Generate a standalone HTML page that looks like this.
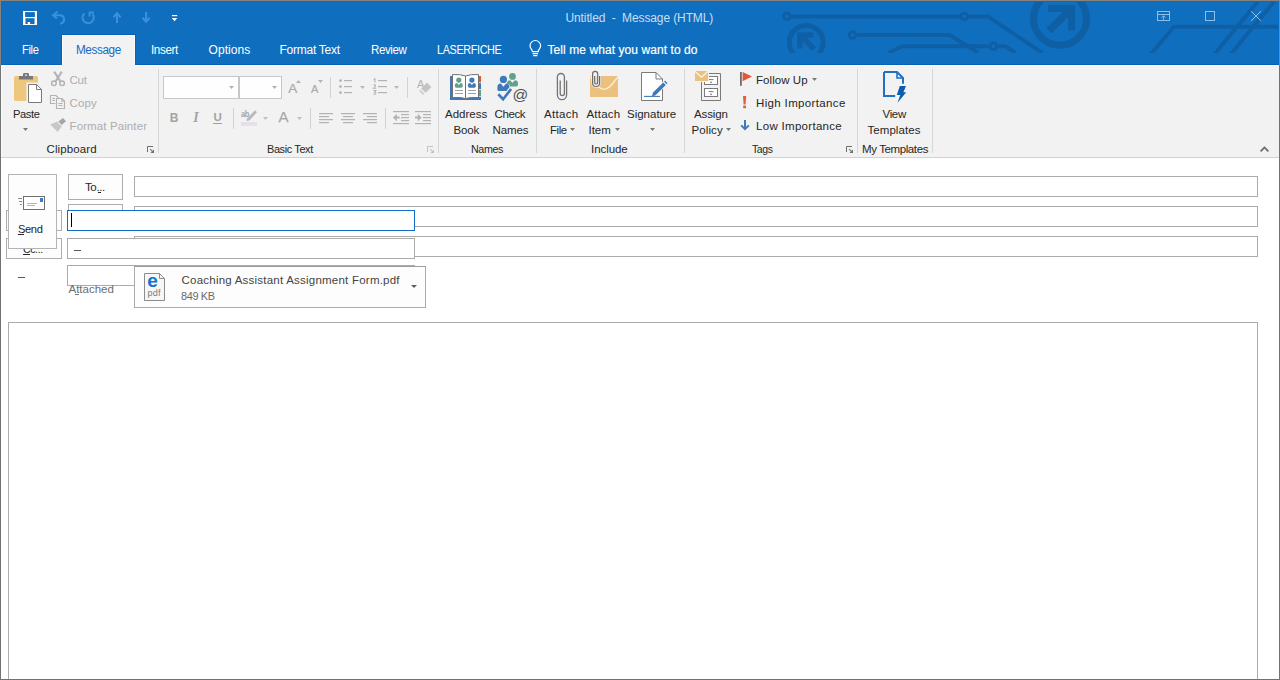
<!DOCTYPE html>
<html lang="en">
<head>
<meta charset="utf-8">
<title>Untitled - Message (HTML)</title>
<style>

html,body{margin:0;padding:0;}
body{width:1280px;height:680px;overflow:hidden;position:relative;background:#ffffff;
  font-family:"Liberation Sans",sans-serif;font-size:12px;color:#262626;}
.a{position:absolute;}
.t{position:absolute;white-space:pre;display:block;}
svg{position:absolute;overflow:visible;}
#win{position:absolute;left:0;top:0;width:1280px;height:680px;overflow:hidden;}
/* window frame */
#frame-top{left:0;top:0;width:1280px;height:1px;background:#878480;}
#frame-left-a{left:0;top:0;width:1px;height:65px;background:#878480;}
#frame-left-b{left:0;top:65px;width:1px;height:615px;background:#727272;}
#frame-right-a{left:1279px;top:0;width:1px;height:65px;background:#8a8580;}
#frame-right-b{left:1279px;top:65px;width:1px;height:615px;background:#727272;}
#frame-bottom{left:0;top:679px;width:1280px;height:1px;background:#727272;}


#titlebar{left:1px;top:1px;width:1278px;height:64px;background:#106ebe;overflow:hidden;
  box-shadow:inset 1px 1px 0 #066bc5, inset -1px 0 0 #066bc5;}
#circuit{left:2px;top:2px;width:1276px;height:50.5px;overflow:hidden;}


#tab-message{left:62px;top:35px;width:73px;height:31px;background:#f2f2f2;box-sizing:border-box;
  border:1px solid #fffaf5;border-bottom:0;box-shadow:0 0 0 1px #0562bb;}


#ribbon{left:1px;top:65px;width:1278px;height:92px;background:#f2f2f2;border-bottom:1px solid #d2d2d2;}
#ribbon-hi{left:1px;top:65px;width:61px;height:1px;background:#fdfaf6;}
#ribbon-hi-r{left:135px;top:65px;width:1144px;height:1px;background:#fdfaf6;}
#ribbon-hi2{left:1px;top:66px;width:1px;height:91px;background:#fbfbfb;}
.gsep{position:absolute;top:69px;width:1px;height:84px;background:#d6d6d6;}
.isep{position:absolute;width:1px;background:#d2d2d2;}
.combo{position:absolute;top:76px;height:21px;background:#fefefe;border:1px solid #c8c8c8;}



.fld{position:absolute;background:#fff;border:1px solid #ababab;box-sizing:border-box;}
.btn{position:absolute;background:#fdfdfd;border:1px solid #adadad;box-sizing:border-box;}
#fld-focus{border-color:#0f6fc8;}
#caret{left:71px;top:213px;width:1px;height:14px;background:#000;}
#attach{left:134px;top:266px;width:292px;height:42px;background:#fdfdfd;border:1px solid #ababab;border-top-color:#9d9d9d;box-sizing:border-box;}
#bodybox{left:8px;top:322px;width:1250px;height:370px;background:#fff;border:1px solid #ababab;box-sizing:border-box;}


</style>
</head>
<body>
<!-- 00_base -->
<div id="win">
<!-- 10_title -->

<div class="a" id="titlebar"></div>
<div class="a" style="left:1px;top:64px;width:1278px;height:1px;background:#0562bb"></div>

<div class="a" id="circuit"><svg width="1276" height="51" viewBox="2 2 1276 51" style="left:0;top:0">
 <g fill="none" stroke="#0f5fa5" stroke-width="3.9" stroke-linejoin="round">
  <!-- trace 1 -->
  <path d="M791 16.5 H959.8 M969 16.5 H987.8 L1042.4 53"/>
  <circle cx="786.9" cy="16.4" r="3.3" stroke-width="2.9"/>
  <circle cx="964.4" cy="16.4" r="3.3" stroke-width="2.9"/>
  <!-- trace 2 -->
  <path d="M857.2 35 H949.6 L978.6 53"/>
  <circle cx="852.5" cy="35" r="3.3" stroke-width="2.9"/>
  <!-- trace 3 -->
  <path d="M888 53 L902.5 46.3 H988.8 M998.3 46.3 H1005.4 L1015.6 53"/>
  <circle cx="993.5" cy="46.2" r="3.3" stroke-width="2.9"/>
  <!-- right traces -->
  <path d="M1151 54 L1174 26.7 H1280"/>
  <path d="M1214.6 54 L1259.2 0"/>
  <path d="M1230.8 54 L1275.4 0"/>
 </g>
 <!-- small NW arrow badge -->
 <circle cx="806.2" cy="42.4" r="17" fill="none" stroke="#0f5fa5" stroke-width="5"/>
 <path d="M797.2 32.2 H813.6 V37.6 H806.6 L816 47 L812 51 L802.6 41.6 V48.6 H797.2 Z" fill="#0f5fa5"/>
 <!-- big NE arrow badge -->
 <circle cx="1060" cy="18.7" r="26.5" fill="none" stroke="#0f5fa5" stroke-width="7"/>
 <path d="M1048 5 H1075 V30.6 H1068 V17 L1051.5 33.2 L1046.4 28 L1063 12 H1048 Z" fill="#0f5fa5"/>
</svg></div>


<!-- save -->
<svg width="16" height="16" style="left:22px;top:10px" viewBox="22 10 16 16">
 <g fill="#fdf8f4">
 <rect x="23" y="11" width="2.1" height="14"/><rect x="34.9" y="11" width="2.1" height="14"/>
 <rect x="23" y="11" width="14" height="1.1"/><rect x="23" y="24" width="14" height="1"/>
 <rect x="25" y="17" width="10" height="1.2"/>
 <rect x="25" y="18" width="0.8" height="6" opacity="0.55"/><rect x="34.2" y="18" width="0.8" height="6" opacity="0.55"/>
 <rect x="27.7" y="22" width="2.4" height="2.2"/>
 </g>
</svg>
<!-- undo -->
<svg width="18" height="16" style="left:50px;top:10px" viewBox="50 10 18 16">
 <path d="M57.6 11.6 L53 15.2 L57 18.6" fill="none" stroke="#3a90da" stroke-width="2"/>
 <path d="M53.4 15.2 H60.4 A4.3 4.3 0 0 1 61 23.6 L60.2 23.7" fill="none" stroke="#3a90da" stroke-width="2"/>
</svg>
<!-- redo/repeat -->
<svg width="16" height="16" style="left:80px;top:10px" viewBox="80 10 16 16">
 <path d="M84.4 13.4 A5.6 5.6 0 1 0 92.6 14.2" fill="none" stroke="#3a90da" stroke-width="2"/>
 <path d="M89.6 16.6 V12.4 H94" fill="none" stroke="#3a90da" stroke-width="2"/>
</svg>
<!-- previous item -->
<svg width="14" height="16" style="left:110px;top:10px" viewBox="110 10 14 16">
 <path d="M117 13 V23 M113.4 17.2 L117 13.4 L120.6 17.2" fill="none" stroke="#3a90da" stroke-width="2.1"/>
</svg>
<!-- next item -->
<svg width="14" height="16" style="left:139px;top:10px" viewBox="139 10 14 16">
 <path d="M146.1 12 V22 M142.5 17.8 L146.1 21.6 L149.7 17.8" fill="none" stroke="#3a90da" stroke-width="2.1"/>
</svg>
<!-- customize QAT -->
<svg width="10" height="10" style="left:170px;top:13px" viewBox="170 13 10 10">
 <rect x="171.9" y="15" width="5.3" height="1.2" fill="#fff"/>
 <path d="M171.7 18 H177.3 L174.5 21.3 Z" fill="#fff"/>
</svg>

<span class="t" style="left:565.50px;top:11.40px;font-size:12px;line-height:14px;color:#c9def2;letter-spacing:-0.112px;">Untitled  -  Message (HTML)</span>

<!-- ribbon display options -->
<svg width="16" height="14" style="left:1156px;top:9px" viewBox="1156 9 16 14">
 <rect x="1157.5" y="11.5" width="12" height="9" fill="none" stroke="#8fbde4" stroke-width="1"/>
 <path d="M1157.5 14.5 H1169.5" stroke="#8fbde4" stroke-width="1"/>
 <path d="M1163.5 20 V15.8 M1161.4 17.8 L1163.5 15.7 L1165.6 17.8" fill="none" stroke="#8fbde4" stroke-width="0.9"/>
</svg>
<!-- maximize -->
<svg width="14" height="14" style="left:1203px;top:9px" viewBox="1203 9 14 14">
 <rect x="1205.5" y="11.5" width="9" height="9" fill="none" stroke="#8fbde4" stroke-width="1"/>
</svg>
<!-- close -->
<svg width="14" height="14" style="left:1249px;top:9px" viewBox="1249 9 14 14">
 <path d="M1251 11 L1261 21 M1261 11 L1251 21" stroke="#8fbde4" stroke-width="1"/>
</svg>


<!-- 20_tabs -->

<div class="a" id="tab-message"></div>
<span class="t" style="left:21.50px;top:43.30px;font-size:12px;line-height:14px;color:#ffffff;letter-spacing:-0.400px;transform:scaleX(0.9309);transform-origin:0 0;">File</span>
<span class="t" style="left:75.50px;top:43.30px;font-size:12px;line-height:14px;color:#1868bd;letter-spacing:-0.400px;transform:scaleX(0.9761);transform-origin:0 0;">Message</span>
<span class="t" style="left:150.50px;top:43.30px;font-size:12px;line-height:14px;color:#ffffff;letter-spacing:-0.400px;transform:scaleX(0.9719);transform-origin:0 0;">Insert</span>
<span class="t" style="left:208.50px;top:43.30px;font-size:12px;line-height:14px;color:#ffffff;letter-spacing:0.081px;">Options</span>
<span class="t" style="left:279.50px;top:43.30px;font-size:12px;line-height:14px;color:#ffffff;letter-spacing:-0.253px;">Format Text</span>
<span class="t" style="left:370.50px;top:43.30px;font-size:12px;line-height:14px;color:#ffffff;letter-spacing:-0.400px;transform:scaleX(0.9605);transform-origin:0 0;">Review</span>
<span class="t" style="left:436.50px;top:43.30px;font-size:12px;line-height:14px;color:#ffffff;letter-spacing:-0.400px;transform:scaleX(0.9032);transform-origin:0 0;">LASERFICHE</span>
<!-- tell me lightbulb -->
<svg width="16" height="18" style="left:527px;top:40px" viewBox="527 40 16 18">
 <path d="M532.4 51.6 C532.4 49.6 530 48.6 530 45.8 A5.3 5.3 0 0 1 540.6 45.8 C540.6 48.6 538.2 49.6 538.2 51.6 Z" fill="none" stroke="#fff" stroke-width="1.2"/>
 <path d="M532.6 53.6 H538 M533.2 55.6 H537.4" stroke="#fff" stroke-width="1.1"/>
</svg>
<span class="t" style="left:547.50px;top:43.30px;font-size:12px;line-height:14px;color:#ffffff;letter-spacing:0.075px;-webkit-text-stroke:0.18px #fff;">Tell me what you want to do</span>

<!-- 30_ribbon -->

<div class="a" id="ribbon"></div><div class="a" id="ribbon-hi"></div><div class="a" id="ribbon-hi-r"></div><div class="a" id="ribbon-hi2"></div>
<div class="gsep" style="left:158px"></div><div class="gsep" style="left:438px"></div><div class="gsep" style="left:536px"></div><div class="gsep" style="left:684px"></div><div class="gsep" style="left:857px"></div><div class="gsep" style="left:932px"></div>

<!-- paste -->
<svg width="30" height="32" style="left:13px;top:72px" viewBox="13 72 30 32">
 <rect x="14" y="76" width="24" height="25" rx="1.6" fill="#eec77e"/>
 <path d="M23 76 V74.2 Q23 73 24.2 73 H27.8 Q29 73 29 74.2 V76 H33 V79.6 H19 V76 Z" fill="#787878"/>
 <rect x="25.2" y="74.4" width="1.6" height="1.6" fill="#e8e8e8"/>
 <path d="M27.5 83.5 H37 L42.5 89 V103.5 H27.5 Z" fill="#fff" stroke="#f2f2f2" stroke-width="2.2"/>
 <path d="M28.5 84.5 H36.6 L41.5 89.4 V102.5 H28.5 Z" fill="#fff" stroke="#7a7a7a" stroke-width="1"/>
 <path d="M36.5 84.6 V89.5 H41.4" fill="none" stroke="#7a7a7a" stroke-width="1"/>
</svg>
<span class="t" style="left:12.50px;top:108.00px;font-size:11.5px;line-height:12px;color:#262626;letter-spacing:-0.400px;transform:scaleX(0.9672);transform-origin:0 0;">Paste</span>
<svg width="5" height="3" style="left:23px;top:128px" viewBox="0 0 5 3"><path d="M0 0 H5 L2.5 3 Z" fill="#777777"/></svg>
<!-- cut -->
<svg width="16" height="17" style="left:50px;top:70px" viewBox="50 70 16 17">
 <g fill="none" stroke="#b3b3b3">
  <path d="M54.2 71.6 L60.4 81.4 M61.8 71.6 L55.6 81.4" stroke-width="2"/>
  <circle cx="53.9" cy="83.3" r="2.3" stroke-width="1.5"/><circle cx="62.1" cy="83.3" r="2.3" stroke-width="1.5"/>
 </g>
</svg>
<span class="t" style="left:69.50px;top:74.00px;font-size:11.5px;line-height:12px;color:#adadad;letter-spacing:-0.258px;">Cut</span>
<!-- copy -->
<svg width="17" height="16" style="left:49px;top:94px" viewBox="49 94 17 16">
 <g fill="none" stroke="#b3b3b3" stroke-width="1.1">
  <path d="M55.5 103.5 H50.5 V95.5 H56 L58.5 98"/>
  <path d="M52.4 98.5 H55 M52.4 100.5 H55"/>
  <path d="M56.5 98.5 H62 L64.5 101 V108.5 H56.5 Z"/>
  <path d="M61.8 98.6 V101.2 H64.4"/>
  <path d="M58.4 103.5 H62.6 M58.4 105.5 H62.6"/>
 </g>
</svg>
<span class="t" style="left:69.50px;top:97.00px;font-size:11.5px;line-height:12px;color:#adadad;letter-spacing:0.161px;">Copy</span>
<!-- format painter -->
<svg width="18" height="16" style="left:49px;top:117px" viewBox="49 117 18 16">
 <path d="M63 118 L66 121.2 L61.6 125 L58.4 121.6 Z" fill="#a6a6a6"/>
 <path d="M57.4 121.4 L62 126 L57.6 132 L50.2 124.6 Z" fill="#c9c6c9"/>
 <path d="M57.6 122 L61.4 125.8" stroke="#f2f2f2" stroke-width="1"/>
</svg>
<span class="t" style="left:69.50px;top:119.80px;font-size:11.5px;line-height:12px;color:#adadad;letter-spacing:0.112px;">Format Painter</span>
<span class="t" style="left:46.50px;top:143.00px;font-size:11.5px;line-height:12px;color:#262626;letter-spacing:0.123px;">Clipboard</span>
<!-- dialog launcher -->
<svg width="8" height="8" style="left:147px;top:146px" viewBox="0 0 8 8">
 <path d="M0.5 6 V0.5 H6" fill="none" stroke="#6e6e6e" stroke-width="1"/>
 <path d="M3.2 3.2 L5.6 5.6" stroke="#6e6e6e" stroke-width="1.1"/>
 <path d="M7 3.4 V7 H3.4 Z" fill="#6e6e6e"/>
</svg>


<div class="combo" style="left:163px;width:74px"></div>
<div class="combo" style="left:239px;width:41px"></div>
<svg width="5" height="3" style="left:229px;top:86px" viewBox="0 0 5 3"><path d="M0 0 H5 L2.5 3 Z" fill="#b0b0b0"/></svg><svg width="5" height="3" style="left:272px;top:86px" viewBox="0 0 5 3"><path d="M0 0 H5 L2.5 3 Z" fill="#b0b0b0"/></svg>
<!-- grow / shrink font -->
<span class="t" style="left:288.30px;top:80.70px;font-size:13.5px;line-height:15px;color:#aaaaaa;letter-spacing:0.000px;-webkit-text-stroke:0.2px #aaaaaa;">A</span>
<svg width="5" height="3" style="left:296px;top:80px" viewBox="0 0 5 3"><path d="M0 3 H5 L2.5 0 Z" fill="#b3b3b3"/></svg>
<span class="t" style="left:311.00px;top:82.70px;font-size:11px;line-height:12px;color:#aaaaaa;letter-spacing:0.000px;-webkit-text-stroke:0.2px #aaaaaa;">A</span>
<svg width="5" height="3" style="left:318px;top:80px" viewBox="0 0 5 3"><path d="M0 0 H5 L2.5 3 Z" fill="#b3b3b3"/></svg>
<div class="isep" style="left:330px;top:77px;height:21px"></div>
<!-- bullets -->
<svg width="14" height="14" style="left:339px;top:79px" viewBox="339 79 14 14">
 <g fill="#b3b3b3"><circle cx="340.5" cy="80.6" r="1.4"/><circle cx="340.5" cy="86.6" r="1.4"/><circle cx="340.5" cy="92.6" r="1.4"/>
 <rect x="344" y="80" width="8" height="1.2"/><rect x="344" y="86" width="8" height="1.2"/><rect x="344" y="92" width="8" height="1.2"/></g>
</svg>
<svg width="5" height="3" style="left:360px;top:86px" viewBox="0 0 5 3"><path d="M0 0 H5 L2.5 3 Z" fill="#b9b9b9"/></svg>
<!-- numbering -->
<svg width="15" height="16" style="left:373px;top:78px" viewBox="373 78 15 16">
 <g fill="#b3b3b3"><rect x="378" y="80" width="9" height="1.2"/><rect x="378" y="86" width="9" height="1.2"/><rect x="378" y="92" width="9" height="1.2"/></g>
 <g fill="none" stroke="#b3b3b3" stroke-width="1.1">
  <path d="M373.6 79.8 L374.9 78.9 V82.6"/>
  <path d="M373.5 85.4 Q374.8 84.2 375.6 85.3 Q376 86.3 373.6 88.3 H376.2"/>
  <path d="M373.6 90.6 H375.8 L374.6 92 Q376.2 92.2 375.8 93.6 Q375 94.6 373.4 94"/>
 </g>
</svg>
<svg width="5" height="3" style="left:394px;top:86px" viewBox="0 0 5 3"><path d="M0 0 H5 L2.5 3 Z" fill="#b9b9b9"/></svg>
<div class="isep" style="left:407px;top:77px;height:21px"></div>
<!-- clear formatting -->
<span class="t" style="left:417.00px;top:78.20px;font-size:11px;line-height:12px;color:#b3b3b3;letter-spacing:0.000px;">A</span>
<svg width="16" height="14" style="left:417px;top:82px" viewBox="417 82 16 14">
 <path d="M427 82.6 L431.4 87 L425.6 92.8 L421.2 88.4 Z" fill="#c4c4c4"/>
 <path d="M420.4 89.6 L424.4 93.6 L423 95 L419 91 Z" fill="#d0d0d0"/>
</svg>
<!-- B I U -->
<span class="t" style="left:169.80px;top:111.20px;font-size:12px;line-height:14px;color:#a4a4a4;letter-spacing:0.000px;font-weight:bold;">B</span>
<span class="t" style="left:193.20px;top:110.20px;font-size:14px;line-height:15px;color:#a4a4a4;letter-spacing:0.000px;font-family:'Liberation Serif',serif;font-weight:bold;font-style:italic;">I</span>
<span class="t" style="left:213.60px;top:110.80px;font-size:11.5px;line-height:12px;color:#a4a4a4;letter-spacing:0.000px;font-weight:bold;">U</span>
<div class="a" style="left:213px;top:123px;width:9px;height:1px;background:#a0a0a0"></div>
<div class="isep" style="left:233px;top:108px;height:21px"></div>
<!-- highlight -->
<span class="t" style="left:241.00px;top:109.00px;font-size:8.5px;line-height:10px;color:#a4a4a4;letter-spacing:-0.400px;font-weight:bold;transform:scaleX(0.8868);transform-origin:0 0;">ab</span>
<svg width="18" height="17" style="left:240px;top:109px" viewBox="240 109 18 17">
 <path d="M255 110.2 L257 112.2 L249.4 120.4 L246.6 121 L247 118.4 Z" fill="#b9b9b9"/>
 <rect x="241" y="122" width="16" height="3.8" fill="#e7dfe7"/>
</svg>
<svg width="5" height="3" style="left:263px;top:117px" viewBox="0 0 5 3"><path d="M0 0 H5 L2.5 3 Z" fill="#c0c0c0"/></svg>
<!-- font colour -->
<span class="t" style="left:278.60px;top:108.40px;font-size:15px;line-height:17px;color:#a8a8a8;letter-spacing:0.000px;-webkit-text-stroke:0.25px #a8a8a8;">A</span>
<svg width="5" height="3" style="left:297px;top:117px" viewBox="0 0 5 3"><path d="M0 0 H5 L2.5 3 Z" fill="#c0c0c0"/></svg>
<div class="isep" style="left:310px;top:108px;height:21px"></div>
<!-- alignment -->
<svg width="60" height="12" style="left:318px;top:112px" viewBox="318 112 60 12">
 <rect x="319" y="113" width="14" height="1.2" fill="#b3b3b3"/><rect x="319" y="116" width="10" height="1.2" fill="#b3b3b3"/><rect x="319" y="119" width="14" height="1.2" fill="#b3b3b3"/><rect x="319" y="122" width="10" height="1.2" fill="#b3b3b3"/>
 <rect x="341" y="113" width="14" height="1.2" fill="#b3b3b3"/><rect x="343" y="116" width="10" height="1.2" fill="#b3b3b3"/><rect x="341" y="119" width="14" height="1.2" fill="#b3b3b3"/><rect x="343" y="122" width="10" height="1.2" fill="#b3b3b3"/>
 <rect x="363" y="113" width="14" height="1.2" fill="#b3b3b3"/><rect x="367" y="116" width="10" height="1.2" fill="#b3b3b3"/><rect x="363" y="119" width="14" height="1.2" fill="#b3b3b3"/><rect x="367" y="122" width="10" height="1.2" fill="#b3b3b3"/>
</svg>
<div class="isep" style="left:385px;top:108px;height:21px"></div>
<!-- indent -->
<svg width="40" height="15" style="left:392px;top:110px" viewBox="392 110 40 15">
 <g fill="#b3b3b3">
  <rect x="393" y="111" width="16" height="1.2"/><rect x="401" y="114" width="8" height="1.2"/><rect x="401" y="117" width="8" height="1.2"/><rect x="401" y="120" width="8" height="1.2"/><rect x="393" y="123" width="16" height="1.2"/>
  <rect x="415" y="111" width="16" height="1.2"/><rect x="423" y="114" width="8" height="1.2"/><rect x="423" y="117" width="8" height="1.2"/><rect x="423" y="120" width="8" height="1.2"/><rect x="415" y="123" width="16" height="1.2"/>
 </g>
 <g fill="#b3b3b3">
  <path d="M393 117.6 L396.8 113.8 V116.6 H399.6 V118.6 H396.8 V121.4 Z"/>
  <path d="M421.6 117.6 L417.8 113.8 V116.6 H415 V118.6 H417.8 V121.4 Z"/>
 </g>
</svg>
<span class="t" style="left:266.50px;top:143.00px;font-size:11.5px;line-height:12px;color:#262626;letter-spacing:-0.400px;transform:scaleX(0.9511);transform-origin:0 0;">Basic Text</span>
<svg width="8" height="8" style="left:427px;top:146px" viewBox="0 0 8 8">
 <path d="M0.5 6 V0.5 H6" fill="none" stroke="#c3c3c3" stroke-width="1"/>
 <path d="M3.2 3.2 L5.6 5.6" stroke="#c3c3c3" stroke-width="1.1"/>
 <path d="M7 3.4 V7 H3.4 Z" fill="#c3c3c3"/>
</svg>


<!-- 31_ribbon2 -->

<!-- address book -->
<svg width="33" height="28" style="left:449px;top:73px" viewBox="449 73 33 28">
 <rect x="450" y="76" width="31" height="24" fill="#4079ba"/>
 <rect x="478.6" y="76" width="2.4" height="6.4" fill="#dc5a34"/><rect x="478.6" y="83.2" width="2.4" height="6" fill="#4079ba"/><rect x="478.6" y="90" width="2.4" height="6" fill="#62a18b"/>
 <rect x="478.6" y="82.4" width="2.4" height="0.8" fill="#f2f2f2"/><rect x="478.6" y="89.2" width="2.4" height="0.8" fill="#f2f2f2"/><rect x="478.6" y="96" width="2.4" height="0.8" fill="#f2f2f2"/>
 <path d="M452.5 74.6 Q460 74 465.5 76 V98.6 Q460 96.8 452.5 97.6 Z" fill="#fff" stroke="#717171" stroke-width="1"/>
 <path d="M465.5 76 Q471 74 478.5 74.6 V97.6 Q471 96.8 465.5 98.6 Z" fill="#fff" stroke="#717171" stroke-width="1"/>
 <circle cx="458.8" cy="80.1" r="2.6" fill="#62a18b"/><path d="M454.80 85.30 Q454.80 82.90 457.04 82.90 L458.80 84.92 L460.56 82.90 Q462.80 82.90 462.80 85.30 V86.10 Q462.80 87.70 461.20 87.70 H456.40 Q454.80 87.70 454.80 86.10 Z" fill="#62a18b" />
 <circle cx="471.9" cy="80.1" r="2.6" fill="#4079ba"/><path d="M467.90 85.30 Q467.90 82.90 470.14 82.90 L471.90 84.92 L473.66 82.90 Q475.90 82.90 475.90 85.30 V86.10 Q475.90 87.70 474.30 87.70 H469.50 Q467.90 87.70 467.90 86.10 Z" fill="#4079ba" />
 <path d="M455 90.5 H463 M455 93.5 H463 M468 90.5 H476 M468 93.5 H476" stroke="#a2a2a2" stroke-width="1"/>
</svg>
<span class="t" style="left:445.00px;top:108.00px;font-size:11.5px;line-height:12px;color:#262626;letter-spacing:-0.003px;">Address</span>
<span class="t" style="left:453.50px;top:124.00px;font-size:11.5px;line-height:12px;color:#262626;letter-spacing:-0.172px;">Book</span>
<!-- check names -->
<svg width="32" height="32" style="left:496px;top:72px" viewBox="496 72 32 32">
 <circle cx="512.5" cy="76.4" r="3.4" fill="#62a18b"/><path d="M507.00 83.30 Q507.00 80.20 510.08 80.20 L512.50 82.80 L514.92 80.20 Q518.00 80.20 518.00 83.30 V84.80 Q518.00 86.40 516.40 86.40 H508.60 Q507.00 86.40 507.00 84.80 Z" fill="#62a18b" />
 <circle cx="503.4" cy="79.4" r="4.5" fill="#f2f2f2"/>
 <path d="M496.60 87.90 Q496.60 83.60 500.41 83.60 L503.40 87.21 L506.39 83.60 Q510.20 83.60 510.20 87.90 V90.60 Q510.20 92.20 508.60 92.20 H498.20 Q496.60 92.20 496.60 90.60 Z" fill="#f2f2f2" />
 <circle cx="503.4" cy="79.4" r="3.6" fill="#4079ba"/><path d="M497.40 87.30 Q497.40 83.60 500.76 83.60 L503.40 86.71 L506.04 83.60 Q509.40 83.60 509.40 87.30 V89.40 Q509.40 91.00 507.80 91.00 H499.00 Q497.40 91.00 497.40 89.40 Z" fill="#4079ba" />
 <path d="M498.3 94.3 L503.1 99.3 L511.1 89" fill="none" stroke="#f2f2f2" stroke-width="5"/>
 <path d="M498.3 94.3 L503.1 99.3 L511.1 89" fill="none" stroke="#4079ba" stroke-width="2.7"/>
</svg>
<span class="t" style="left:512.40px;top:85.80px;font-size:15.5px;line-height:17px;color:#505050;letter-spacing:0.000px;">@</span>
<span class="t" style="left:494.50px;top:108.00px;font-size:11.5px;line-height:12px;color:#262626;letter-spacing:-0.379px;">Check</span>
<span class="t" style="left:492.50px;top:124.00px;font-size:11.5px;line-height:12px;color:#262626;letter-spacing:-0.129px;">Names</span>
<span class="t" style="left:470.50px;top:143.00px;font-size:11.5px;line-height:12px;color:#262626;letter-spacing:-0.400px;transform:scaleX(0.9318);transform-origin:0 0;">Names</span>

<!-- attach file: paperclip -->
<svg width="14" height="30" style="left:555px;top:72px" viewBox="555 72 14 30">
 <path d="M560.2 80.4 V93.6 A2.1 2.1 0 0 0 564.4 93.6 V77 A3.5 3.5 0 0 0 557.4 77 V95 A4.6 4.6 0 0 0 566.6 95 V80.4" fill="none" stroke="#747474" stroke-width="1.3"/>
</svg>
<span class="t" style="left:544.00px;top:108.00px;font-size:11.5px;line-height:12px;color:#262626;letter-spacing:0.294px;">Attach</span>
<span class="t" style="left:549.50px;top:124.00px;font-size:11.5px;line-height:12px;color:#262626;letter-spacing:-0.400px;transform:scaleX(0.9840);transform-origin:0 0;">File</span>
<svg width="5" height="3" style="left:570px;top:128px" viewBox="0 0 5 3"><path d="M0 0 H5 L2.5 3 Z" fill="#777777"/></svg>
<!-- attach item: envelope + clip -->
<svg width="30" height="28" style="left:589px;top:70px" viewBox="589 70 30 28">
 <rect x="590" y="76" width="28" height="21" fill="#ecc17e"/>
 <path d="M590 76.6 C597 86 600 89.4 604 89.4 C608 89.4 611 86 618 76.6" fill="none" stroke="#fbf0de" stroke-width="1.4"/>
 <path d="M594.7 76 V82.4 A1.5 1.5 0 0 0 597.7 82.4 V74 A2.55 2.55 0 0 0 592.6 74 V83 A3.5 3.5 0 0 0 599.6 83 V76" fill="none" stroke="#f2f2f2" stroke-width="2.6"/>
 <path d="M594.7 76 V82.4 A1.5 1.5 0 0 0 597.7 82.4 V74 A2.55 2.55 0 0 0 592.6 74 V83 A3.5 3.5 0 0 0 599.6 83 V76" fill="none" stroke="#6c6c6c" stroke-width="1.2"/>
</svg>
<span class="t" style="left:586.50px;top:108.00px;font-size:11.5px;line-height:12px;color:#262626;letter-spacing:0.194px;">Attach</span>
<span class="t" style="left:588.50px;top:124.00px;font-size:11.5px;line-height:12px;color:#262626;letter-spacing:-0.010px;">Item</span>
<svg width="5" height="3" style="left:615px;top:128px" viewBox="0 0 5 3"><path d="M0 0 H5 L2.5 3 Z" fill="#777777"/></svg>
<!-- signature -->
<svg width="30" height="31" style="left:640px;top:71px" viewBox="640 71 30 31">
 <path d="M641.5 72.5 H656 L662.5 79 V100.5 H641.5 Z" fill="#fff" stroke="#7a7a7a" stroke-width="1"/>
 <path d="M656 72.6 V79 H662.4" fill="none" stroke="#7a7a7a" stroke-width="1"/>
 <path d="M665 80.6 L667.6 83.2 L655.6 95.2 L651.8 96.4 L653 92.6 Z" fill="#f2f2f2" stroke="#fff" stroke-width="1.2"/>
 <path d="M644 96.4 H660" stroke="#4079ba" stroke-width="1.1"/>
 <path d="M663.2 82.4 L665.8 85 L655.6 95.2 L651.8 96.4 L653 92.6 Z" fill="#4079ba"/>
 <path d="M665 80.6 L667.6 83.2 L666.6 84.2 L664 81.6 Z" fill="#4079ba"/>
</svg>
<span class="t" style="left:627.00px;top:108.00px;font-size:11.5px;line-height:12px;color:#262626;letter-spacing:-0.004px;">Signature</span>
<svg width="5" height="3" style="left:650px;top:128px" viewBox="0 0 5 3"><path d="M0 0 H5 L2.5 3 Z" fill="#777777"/></svg>
<span class="t" style="left:591.00px;top:143.00px;font-size:11.5px;line-height:12px;color:#262626;letter-spacing:-0.055px;">Include</span>

<!-- assign policy: cabinet + envelope -->
<svg width="28" height="32" style="left:694px;top:70px" viewBox="694 70 28 32">
 <path d="M701.5 73.5 H720.5 V100.5 H701.5 Z" fill="#f2f2f2" stroke="#7a7a7a" stroke-width="1"/>
 <rect x="704.5" y="76.5" width="13" height="8" fill="#fff" stroke="#7a7a7a" stroke-width="1"/>
 <rect x="704.5" y="88.5" width="13" height="8" fill="#fff" stroke="#7a7a7a" stroke-width="1"/>
 <path d="M708.6 79.6 H713.4 M708.6 91.6 H713.4" stroke="#7a7a7a" stroke-width="1"/>
 <rect x="710.3" y="81.6" width="1.5" height="1.5" fill="#7a7a7a"/><rect x="710.3" y="93.6" width="1.5" height="1.5" fill="#7a7a7a"/>
 <rect x="694" y="70" width="15" height="12" fill="#f2f2f2"/>
 <rect x="695" y="71" width="13" height="10" fill="#ecc17e"/>
 <path d="M695 71.2 L701.5 77.2 L708 71.2" fill="none" stroke="#fdf6ea" stroke-width="1.2"/>
</svg>
<span class="t" style="left:694.00px;top:108.00px;font-size:11.5px;line-height:12px;color:#262626;letter-spacing:-0.103px;">Assign</span>
<span class="t" style="left:691.50px;top:124.00px;font-size:11.5px;line-height:12px;color:#262626;letter-spacing:0.100px;">Policy</span>
<svg width="5" height="3" style="left:726px;top:128px" viewBox="0 0 5 3"><path d="M0 0 H5 L2.5 3 Z" fill="#777777"/></svg>
<!-- follow up flag -->
<svg width="14" height="16" style="left:739px;top:71px" viewBox="739 71 14 16">
 <rect x="740" y="72" width="1.8" height="13.8" fill="#6c6c6c"/>
 <path d="M742.6 72 L752 76.6 L742.6 81.2 Z" fill="#dc5a34"/>
</svg>
<span class="t" style="left:756.00px;top:74.00px;font-size:11.5px;line-height:12px;color:#262626;letter-spacing:0.062px;">Follow Up</span>
<svg width="5" height="3" style="left:812px;top:78px" viewBox="0 0 5 3"><path d="M0 0 H5 L2.5 3 Z" fill="#777777"/></svg>
<!-- high importance -->
<svg width="6" height="14" style="left:742px;top:95px" viewBox="742 95 6 14">
 <path d="M743 96 H746.2 L745.6 104.4 H743.6 Z" fill="#e0603a"/><rect x="743.2" y="105.6" width="2.8" height="2.6" fill="#e0603a"/>
</svg>
<span class="t" style="left:756.00px;top:97.00px;font-size:11.5px;line-height:12px;color:#262626;letter-spacing:0.354px;">High Importance</span>
<!-- low importance -->
<svg width="12" height="12" style="left:739px;top:119px" viewBox="739 119 12 12">
 <path d="M745 120 V128.8 M741.2 125.4 L745 129.2 L748.8 125.4" fill="none" stroke="#4079ba" stroke-width="2"/>
</svg>
<span class="t" style="left:756.00px;top:119.80px;font-size:11.5px;line-height:12px;color:#262626;letter-spacing:0.303px;">Low Importance</span>
<span class="t" style="left:752.00px;top:143.00px;font-size:11.5px;line-height:12px;color:#262626;letter-spacing:-0.400px;transform:scaleX(0.9112);transform-origin:0 0;">Tags</span>
<svg width="8" height="8" style="left:846px;top:146px" viewBox="0 0 8 8">
 <path d="M0.5 6 V0.5 H6" fill="none" stroke="#6e6e6e" stroke-width="1"/>
 <path d="M3.2 3.2 L5.6 5.6" stroke="#6e6e6e" stroke-width="1.1"/>
 <path d="M7 3.4 V7 H3.4 Z" fill="#6e6e6e"/>
</svg>

<svg width="26" height="33" style="left:882px;top:70px" viewBox="882 70 26 33">
 <path d="M884 72 H897 L903 78 V83.8 M895.2 96 H884 V72" fill="none" stroke="#1e72c6" stroke-width="2"/>
 <path d="M897 72.4 V78 H902.6" fill="none" stroke="#1e72c6" stroke-width="1.6"/>
 <path d="M899.8 86 H906 L903.4 92.2 H906.2 L897.6 102.8 L900.2 95 H896.8 Z" fill="#0d5cb0"/>
</svg>
<span class="t" style="left:882.50px;top:108.00px;font-size:11.5px;line-height:12px;color:#262626;letter-spacing:-0.328px;">View</span>
<span class="t" style="left:867.50px;top:124.00px;font-size:11.5px;line-height:12px;color:#262626;letter-spacing:0.059px;">Templates</span>
<span class="t" style="left:862.00px;top:143.00px;font-size:11.5px;line-height:12px;color:#262626;letter-spacing:-0.394px;">My Templates</span>
<!-- collapse ribbon chevron -->
<svg width="11" height="8" style="left:1259px;top:145px" viewBox="1259 145 11 8">
 <path d="M1260.6 151.4 L1264.5 147.4 L1268.4 151.4" fill="none" stroke="#6a6a6a" stroke-width="1.7"/>
</svg>

<!-- 40_header -->

<!-- original right-hand address fields (To / Cc / Subject) -->
<div class="fld" style="left:134px;top:176px;width:1124px;height:21px"></div>
<div class="fld" style="left:134px;top:206px;width:1124px;height:21px"></div>
<div class="fld" style="left:134px;top:236px;width:1124px;height:21px"></div>
<!-- buttons hidden behind Send -->
<div class="btn" style="left:6px;top:210px;width:56px;height:21px"></div>
<div class="btn" style="left:6px;top:238px;width:56px;height:21px"></div>
<span class="t" style="left:23.00px;top:243.00px;font-size:11.5px;line-height:12px;color:#262626;letter-spacing:-0.400px;transform:scaleX(0.9145);transform-origin:0 0;">Cc...</span>
<div class="a" style="left:23px;top:254px;width:7px;height:1px;background:#262626"></div>
<!-- To... button and the one below it -->
<div class="btn" style="left:68px;top:174px;width:55px;height:26px"></div>
<span class="t" style="left:85.00px;top:181.20px;font-size:11.5px;line-height:12px;color:#262626;letter-spacing:-0.383px;">To...</span>
<div class="a" style="left:97.5px;top:192.4px;width:3px;height:1px;background:#262626"></div>
<div class="btn" style="left:68px;top:204px;width:55px;height:26px"></div>
<!-- overlapping narrow fields -->
<div class="fld" id="fld-focus" style="left:67px;top:210px;width:348px;height:21px"></div>
<div class="a" id="caret"></div>
<div class="fld" style="left:67px;top:238px;width:348px;height:21px"></div>
<div class="a" style="left:74px;top:250px;width:7px;height:1px;background:#555"></div>
<div class="fld" style="left:67px;top:265px;width:348px;height:21px"></div>
<div class="a" style="left:18px;top:277px;width:7px;height:1px;background:#555"></div>
<!-- Send button -->
<div class="btn" style="left:8px;top:174px;width:49px;height:75px;border-color:#b4b4b4"></div>
<svg width="30" height="18" style="left:17px;top:194px" viewBox="17 194 30 18">
 <rect x="23.5" y="196.5" width="21" height="13" fill="#fff" stroke="#6f6f6f" stroke-width="1"/>
 <rect x="40" y="198" width="3" height="4" fill="#3d7cc9"/>
 <path d="M27 203.5 H37 M27 205.5 H35" stroke="#b5b5b5" stroke-width="1"/>
 <path d="M18 198.5 H22 M19 201.5 H22 M20 204.5 H22" stroke="#8a8a8a" stroke-width="1"/>
</svg>
<span class="t" style="left:17.50px;top:223.00px;font-size:11.5px;line-height:12px;color:#262626;letter-spacing:-0.400px;transform:scaleX(0.9684);transform-origin:0 0;">Send</span>
<div class="a" style="left:17.5px;top:234px;width:6px;height:1px;background:#262626"></div>
<!-- Attached label + attachment well -->
<span class="t" style="left:68.50px;top:283.00px;font-size:11.5px;line-height:12px;color:#6e6e6e;letter-spacing:-0.007px;">Attached</span>
<div class="a" style="left:75px;top:294.4px;width:4px;height:1px;background:#767676"></div>
<div class="a" id="attach"></div>
<svg width="24" height="30" style="left:143px;top:272px" viewBox="143 272 24 30">
 <path d="M144.5 273.5 H159.5 L164.5 278.5 V300.5 H144.5 Z" fill="#f7f7f7" stroke="#8c8c8c" stroke-width="1"/>
 <path d="M159.5 273.6 V278.5 H164.4" fill="none" stroke="#8c8c8c" stroke-width="1"/>
</svg>
<span class="t" style="left:147.20px;top:270.20px;font-size:19px;line-height:21px;color:#0f74d4;letter-spacing:0.000px;font-weight:bold;">e</span>
<span class="t" style="left:147.40px;top:288.20px;font-size:9px;line-height:10px;color:#7a7a7a;letter-spacing:0.292px;">pdf</span>
<span class="t" style="left:181.50px;top:274.00px;font-size:11.5px;line-height:12px;color:#444444;letter-spacing:0.227px;">Coaching Assistant Assignment Form.pdf</span>
<span class="t" style="left:181.30px;top:289.80px;font-size:11.5px;line-height:12px;color:#6a6a6a;letter-spacing:-0.400px;transform:scaleX(0.9492);transform-origin:0 0;">849 KB</span>
<svg width="6" height="3" style="left:410.5px;top:285px" viewBox="0 0 6 3"><path d="M0 0 H6 L3 3 Z" fill="#5e5e5e"/></svg>
<!-- message body -->
<div class="a" id="bodybox"></div>

<!-- 99_end -->

<div class="a" id="frame-top"></div>
<div class="a" id="frame-left-a"></div><div class="a" id="frame-left-b"></div>
<div class="a" id="frame-right-a"></div><div class="a" id="frame-right-b"></div>
<div class="a" id="frame-bottom"></div>
</div>
</body>
</html>
